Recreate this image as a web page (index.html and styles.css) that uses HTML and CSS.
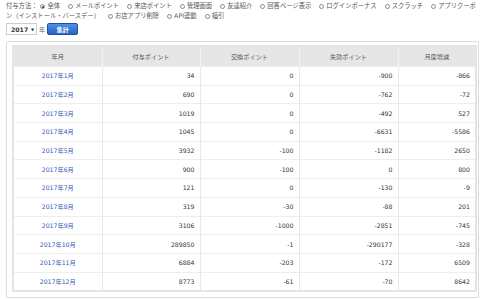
FILE: index.html
```html
<!DOCTYPE html>
<html lang="ja">
<head>
<meta charset="utf-8">
<link rel="stylesheet" href="styles.css">
</head>
<body>
<form class="filter">
  <div class="methods">付与方法：<span class="opt first"><span class="radio checked"></span>全体</span><span class="opt"><span class="radio"></span>メールポイント</span><span class="opt"><span class="radio"></span>来店ポイント</span><span class="opt"><span class="radio"></span>管理画面</span><span class="opt"><span class="radio"></span>友達紹介</span><span class="opt"><span class="radio"></span>回答ページ表示</span><span class="opt"><span class="radio"></span>ログインボーナス</span><span class="opt"><span class="radio"></span>スクラッチ</span><span class="opt"><span class="radio"></span><span>アプリクー</span><span>ポン（インストール・バースデー）</span></span><span class="opt"><span class="radio"></span>お店アプリ削除</span><span class="opt"><span class="radio"></span>API連動</span><span class="opt"><span class="radio"></span>福引</span></div>
  <div class="controls">
    <span class="select"><span class="year">2017</span><span class="caret">▼</span></span>
    <span class="unit">年</span>
    <span class="btn">集計</span>
  </div>
</form>
<div class="panel">
  <table class="report">
    <colgroup><col class="c1"><col class="c2"><col class="c3"><col class="c4"><col class="c5"></colgroup>
    <thead>
      <tr><th>年月</th><th>付与ポイント</th><th>交換ポイント</th><th>失効ポイント</th><th>月度増減</th></tr>
    </thead>
    <tbody>
      <tr><td class="m"><a>2017年1月</a></td><td>34</td><td>0</td><td>-900</td><td>-866</td></tr>
      <tr><td class="m"><a>2017年2月</a></td><td>690</td><td>0</td><td>-762</td><td>-72</td></tr>
      <tr><td class="m"><a>2017年3月</a></td><td>1019</td><td>0</td><td>-492</td><td>527</td></tr>
      <tr><td class="m"><a>2017年4月</a></td><td>1045</td><td>0</td><td>-6631</td><td>-5586</td></tr>
      <tr><td class="m"><a>2017年5月</a></td><td>3932</td><td>-100</td><td>-1182</td><td>2650</td></tr>
      <tr><td class="m"><a>2017年6月</a></td><td>900</td><td>-100</td><td>0</td><td>800</td></tr>
      <tr><td class="m"><a>2017年7月</a></td><td>121</td><td>0</td><td>-130</td><td>-9</td></tr>
      <tr><td class="m"><a>2017年8月</a></td><td>319</td><td>-30</td><td>-88</td><td>201</td></tr>
      <tr><td class="m"><a>2017年9月</a></td><td>3106</td><td>-1000</td><td>-2851</td><td>-745</td></tr>
      <tr><td class="m"><a>2017年10月</a></td><td>289850</td><td>-1</td><td>-290177</td><td>-328</td></tr>
      <tr><td class="m"><a>2017年11月</a></td><td>6884</td><td>-203</td><td>-172</td><td>6509</td></tr>
      <tr><td class="m"><a>2017年12月</a></td><td>8773</td><td>-61</td><td>-70</td><td>8642</td></tr>
    </tbody>
  </table>
</div>
</body>
</html>
```
FILE: styles.css
```css
html, body {
  margin: 0;
  background: #ffffff;
}
body {
  padding: 1px 6px 0 6px;
  font-family: "DejaVu Sans", "Noto Sans CJK JP", sans-serif;
  font-size: 6.2px;
  color: #444;
}
.filter {
  margin: 0;
}
.methods {
  line-height: 10px;
  font-size: 6.3px;
  color: #555;
}
.opt {
  margin-left: 8px;
}
.opt.first {
  margin-left: 3px;
}
.radio {
  display: inline-block;
  width: 5px;
  height: 5px;
  border: 1px solid #888;
  border-radius: 50%;
  box-sizing: border-box;
  margin-right: 2px;
  vertical-align: -0.5px;
  background: #fff;
  position: relative;
}
.radio.checked::after {
  content: "";
  position: absolute;
  left: 1px;
  top: 1px;
  width: 2px;
  height: 2px;
  border-radius: 50%;
  background: #333;
}
.controls {
  display: flex;
  align-items: center;
  margin-top: 1px;
  height: 14px;
}
.select {
  display: inline-flex;
  align-items: center;
  justify-content: space-between;
  width: 31px;
  height: 12px;
  box-sizing: border-box;
  border: 1px solid #ccc;
  padding: 0 2px 0 4px;
  background: #fff;
}
.year {
  font-weight: bold;
  color: #333;
}
.caret {
  font-size: 4px;
  color: #333;
}
.unit {
  margin-left: 2px;
  color: #666;
}
.btn {
  margin-left: 2px;
  width: 31px;
  height: 12px;
  display: inline-flex;
  align-items: center;
  justify-content: center;
  color: #fff;
  font-weight: bold;
  border-radius: 2px;
  border: 1px solid #1d4fa8;
  box-sizing: border-box;
  background: linear-gradient(#4f8fe6, #2563c7);
}
.panel {
  margin-top: 5px;
  border: 1px solid #dcdcdc;
  border-radius: 2px;
  padding: 3px 3px 5px 5px;
  box-shadow: 0 1px 1px rgba(0,0,0,0.06);
}
.report {
  width: 463px;
  border-collapse: collapse;
  table-layout: fixed;
  border: 2px solid #e4e4e4;
}
.c1 { width: 89px; }
.c2 { width: 98px; }
.c3 { width: 99px; }
.c4 { width: 99px; }
.c5 { width: 78px; }
.report th {
  height: 19px;
  background: #e6e6e6;
  color: #555;
  font-weight: normal;
  text-align: center;
  border-left: 1px solid #f3f3f3;
  padding: 0;
}
.report th:first-child {
  border-left: none;
}
.report td {
  height: 18.7px;
  padding: 0 5px;
  text-align: right;
  color: #333;
  border-top: 1px solid #eeeeee;
  border-left: 1px solid #e8e8e8;
  box-sizing: border-box;
}
.report td.m {
  text-align: center;
  border-left: none;
}
.report a {
  color: #3459b5;
  text-decoration: none;
}
```
